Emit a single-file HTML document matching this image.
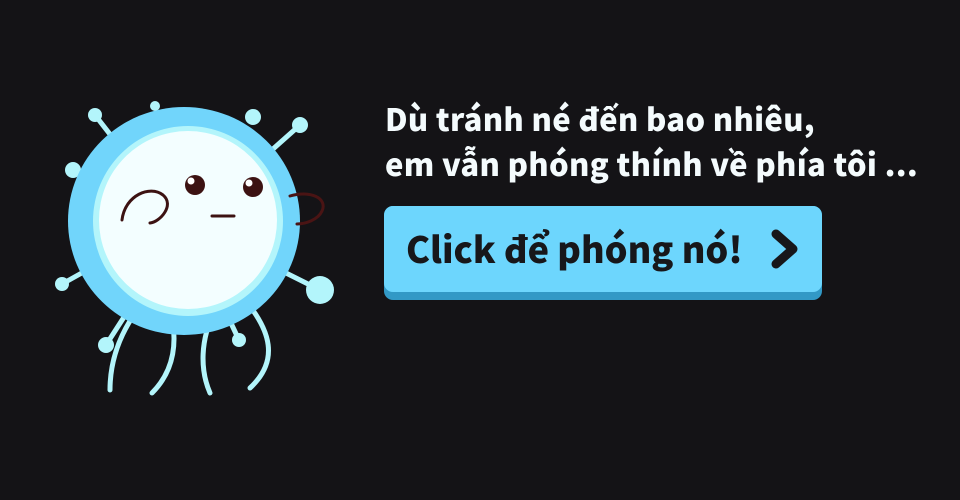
<!DOCTYPE html>
<html><head><meta charset="utf-8"><style>
html,body{margin:0;padding:0;background:#141316;width:960px;height:500px;overflow:hidden}
.t{position:absolute;left:385px;color:#f4fbfd;font-family:"Noto Sans CJK JP","Liberation Sans",sans-serif;font-weight:900;font-size:31px;line-height:45px;white-space:nowrap;letter-spacing:0.3px}
.btn{position:absolute;left:384px;top:206px;width:438px;height:94px;border-radius:9px;background:#3299c6}
.btn .f{position:absolute;left:0;top:0;width:438px;height:86px;border-radius:9px;background:#6dd6fd}
.btn span{position:absolute;left:22px;top:17px;font-family:"Noto Sans CJK JP","Liberation Sans",sans-serif;font-weight:900;font-size:36px;line-height:50px;color:#17171a;white-space:nowrap}
</style></head><body>
<svg width="960" height="500" style="position:absolute;left:0;top:0">
<g stroke="#b3f5fb" stroke-width="5" fill="none" stroke-linecap="round">
<line x1="95" y1="115" x2="130" y2="160"/>
<line x1="300" y1="125" x2="255" y2="165"/>
<line x1="73" y1="170" x2="105" y2="195"/>
<line x1="62" y1="284" x2="105" y2="260"/>
<line x1="320" y1="290" x2="270" y2="265"/>
<line x1="106" y1="345" x2="135" y2="300"/>
<line x1="239" y1="340" x2="220" y2="300"/>
<path d="M145 300 C120 330 110 360 110 390"/>
<path d="M170 310 C178 340 175 370 152 393"/>
<path d="M215 310 C200 340 200 370 210 393"/>
<path d="M245 300 C270 330 280 360 250 388"/>
</g>
<g fill="#b3f5fb">
<circle cx="95" cy="115" r="7"/><circle cx="155" cy="106" r="5"/><circle cx="253" cy="117" r="8"/>
<circle cx="300" cy="125" r="8"/><circle cx="73" cy="170" r="8"/><circle cx="62" cy="284" r="7"/>
<circle cx="320" cy="290" r="14"/><circle cx="106" cy="345" r="8"/><circle cx="239" cy="340" r="7"/>
<circle cx="188" cy="126" r="8"/>
</g>
<ellipse cx="184" cy="221" rx="116" ry="114" fill="#71d5fb"/>
<circle cx="188" cy="221" r="95" fill="#b3f5fb"/>
<circle cx="188" cy="220" r="89" fill="#f3feff"/>
<g fill="#3c1212"><circle cx="195" cy="185" r="10"/><circle cx="253" cy="187" r="10"/></g>
<g fill="#fff"><circle cx="191" cy="181" r="3.5"/><circle cx="249" cy="183" r="3.5"/></g>
<g stroke="#3c1212" stroke-width="3" fill="none" stroke-linecap="round">
<line x1="212" y1="216" x2="234" y2="216"/>
<path d="M122 220 C125 195 150 185 163 195 C175 205 160 222 150 223"/>
<path d="M290 196 C310 190 328 198 322 211 C318 220 305 224 297 224" stroke="#4a1414"/>
</g>
</svg>
<div class="t" style="top:95px">Dù tránh né đến bao nhiêu,</div>
<div class="t" style="top:140px">em vẫn phóng thính về phía tôi ...</div>
<div class="btn"><div class="f"></div><span>Click để phóng nó!</span></div>
<svg width="960" height="500" style="position:absolute;left:0;top:0"><path d="M776 234 L793 249 L776 264" stroke="#17171a" stroke-width="9" fill="none" stroke-linecap="round" stroke-linejoin="round"/></svg>
</body></html>
